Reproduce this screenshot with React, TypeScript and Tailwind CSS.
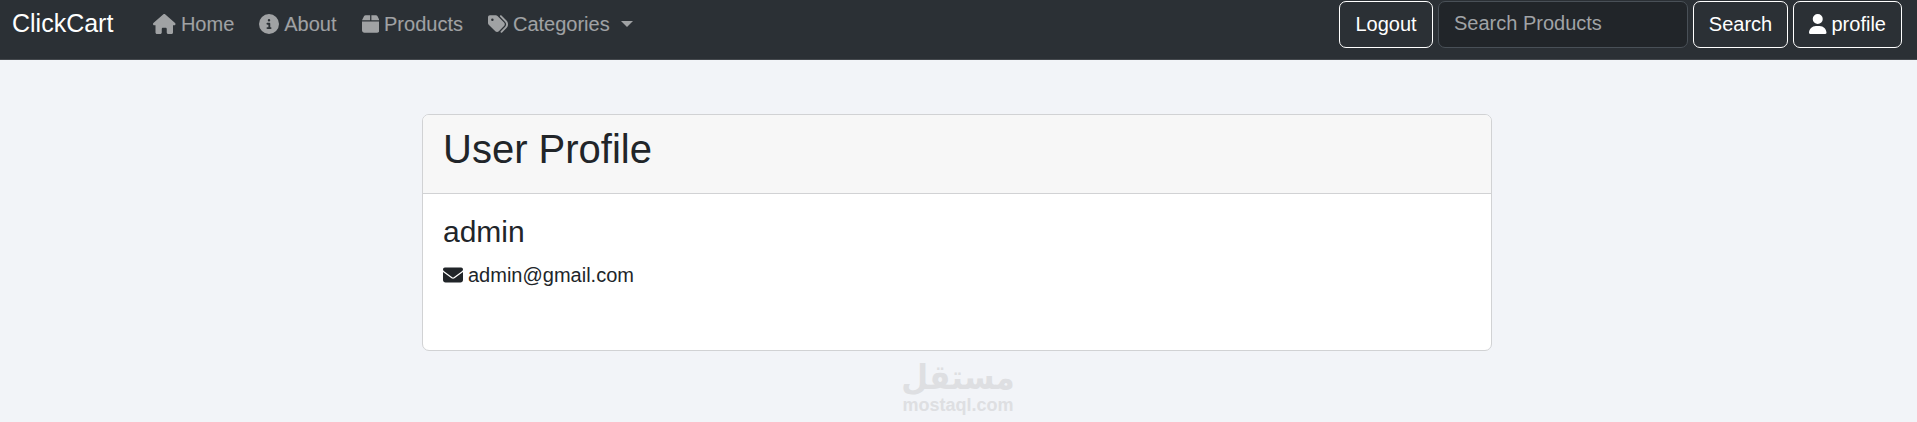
import { FaBox, FaCircleInfo, FaEnvelope, FaHouse, FaTags, FaUser } from "react-icons/fa6";

const FONT = "font-['Liberation_Sans',Arial,sans-serif]";

const NAV = [
  { label: "Home", icon: FaHouse, size: "h-[20px] w-[22.5px]" },
  { label: "About", icon: FaCircleInfo, size: "h-[20px] w-[20px]" },
  { label: "Products", icon: FaBox, size: "h-[20px] w-[17.5px]" },
  { label: "Categories", icon: FaTags, size: "h-[20px] w-[20px]" },
];

const BTN =
  "flex h-[47px] items-center justify-center gap-[5px] rounded-[7px] border border-white bg-transparent pb-[2px] text-[20px] text-white";

export default function App() {
  return (
    <div className={`${FONT} relative h-[422px] overflow-hidden bg-[#f2f4f8] text-[#212529]`}>
      <nav className="flex h-[60px] items-start justify-between border-b border-[#45494e] bg-[#2b3035] pl-[12px] pr-[15px] pt-px">
        <div className="flex h-[47px] items-center pb-[2px]">
          <a className="text-[25px] text-white">ClickCart</a>
          <ul className="ml-[40px] flex items-center gap-[25px] text-[20px] text-white/55">
            {NAV.map(({ label, icon: Icon, size }) => (
              <li key={label} className="flex items-center gap-[5px]">
                <Icon className={size} aria-hidden />
                <span>{label}</span>
              </li>
            ))}
            <li className="-ml-[14px] h-0 w-0 border-x-[6px] border-t-[6px] border-x-transparent border-t-white/55" />
          </ul>
        </div>
        <div className="flex items-center gap-[5px]">
          <button className={`${BTN} w-[94px]`}>Logout</button>
          <input
            placeholder="Search Products"
            className="h-[47px] w-[250px] rounded-[7px] border border-[#495057] bg-[#212529] px-[15px] pb-[2px] text-[20px] text-white outline-none placeholder:text-[#a0a3a6]"
          />
          <button className={`${BTN} w-[95px]`}>Search</button>
          <button className={`${BTN} w-[109px]`}>
            <FaUser className="h-[20px] w-[17.5px]" aria-hidden />
            profile
          </button>
        </div>
      </nav>

      <main className="pt-[54px]">
        <section className="ml-[422px] h-[237px] w-[1070px] overflow-hidden rounded-[7px] border border-[#d1d2d4] bg-white">
          <header className="h-[79px] border-b border-[#d1d2d4] bg-[#f7f7f7] px-[20px] pt-[10px]">
            <h2 className="text-[40px] leading-[48px]">User Profile</h2>
          </header>
          <div className="px-[20px] pt-[20px]">
            <h4 className="text-[30px] leading-[36px]">admin</h4>
            <p className="mt-[10px] flex items-center gap-[5px] text-[20px] leading-[30px]">
              <FaEnvelope className="h-[20px] w-[20px]" aria-hidden />
              admin@gmail.com
            </p>
          </div>
        </section>
      </main>

      <div className="absolute left-[898px] top-[362px] flex w-[120px] flex-col items-center text-[#dedfe2]">
        <span className="h-[30px] scale-y-110 font-['DejaVu_Sans',sans-serif] text-[31px] font-bold leading-[30px]">مستقل</span>
        <span className="mt-[3px] text-[18px] font-bold leading-[20px]">mostaql.com</span>
      </div>
    </div>
  );
}
